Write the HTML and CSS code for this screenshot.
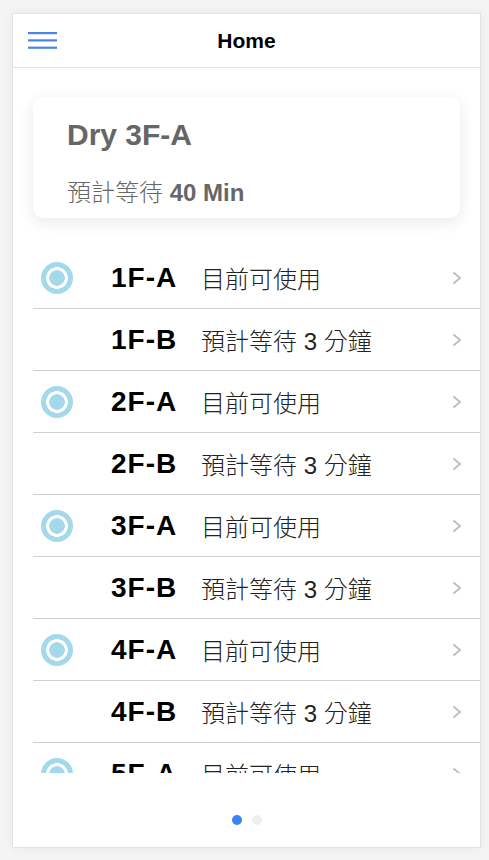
FILE: index.html
```html
<!DOCTYPE html>
<html lang="zh-Hant">
<head>
<meta charset="utf-8">
<title>Home</title>
<link rel="stylesheet" href="styles.css">
</head>
<body>
<div class="app">
  <header class="topbar">
    <button class="menu-btn" aria-label="menu">
      <svg width="29" height="17" viewBox="0 0 29 17"><rect x="0" y="0" width="29" height="2.2" fill="#4a85e2"/><rect x="0" y="7.3" width="29" height="2.2" fill="#4a85e2"/><rect x="0" y="14.6" width="29" height="2.2" fill="#4a85e2"/></svg>
    </button>
    <h1 class="title">Home</h1>
  </header>
  <main class="content">
    <section class="card">
      <div class="card-title">Dry 3F-A</div>
      <div class="card-sub">預計等待 <b>40 Min</b></div>
    </section>
    <ul class="list">
      <li class="row"><span class="icon"><span class="dot"></span></span><span class="label">1F-A</span><span class="status">目前可使用</span><svg class="chev" width="10" height="14" viewBox="0 0 10 14"><polyline points="1.5,1.5 8,7 1.5,12.5" fill="none" stroke="#bdbdbd" stroke-width="1.8"/></svg></li>
      <li class="row"><span class="icon"></span><span class="label">1F-B</span><span class="status">預計等待 3 分鐘</span><svg class="chev" width="10" height="14" viewBox="0 0 10 14"><polyline points="1.5,1.5 8,7 1.5,12.5" fill="none" stroke="#bdbdbd" stroke-width="1.8"/></svg></li>
      <li class="row"><span class="icon"><span class="dot"></span></span><span class="label">2F-A</span><span class="status">目前可使用</span><svg class="chev" width="10" height="14" viewBox="0 0 10 14"><polyline points="1.5,1.5 8,7 1.5,12.5" fill="none" stroke="#bdbdbd" stroke-width="1.8"/></svg></li>
      <li class="row"><span class="icon"></span><span class="label">2F-B</span><span class="status">預計等待 3 分鐘</span><svg class="chev" width="10" height="14" viewBox="0 0 10 14"><polyline points="1.5,1.5 8,7 1.5,12.5" fill="none" stroke="#bdbdbd" stroke-width="1.8"/></svg></li>
      <li class="row"><span class="icon"><span class="dot"></span></span><span class="label">3F-A</span><span class="status">目前可使用</span><svg class="chev" width="10" height="14" viewBox="0 0 10 14"><polyline points="1.5,1.5 8,7 1.5,12.5" fill="none" stroke="#bdbdbd" stroke-width="1.8"/></svg></li>
      <li class="row"><span class="icon"></span><span class="label">3F-B</span><span class="status">預計等待 3 分鐘</span><svg class="chev" width="10" height="14" viewBox="0 0 10 14"><polyline points="1.5,1.5 8,7 1.5,12.5" fill="none" stroke="#bdbdbd" stroke-width="1.8"/></svg></li>
      <li class="row"><span class="icon"><span class="dot"></span></span><span class="label">4F-A</span><span class="status">目前可使用</span><svg class="chev" width="10" height="14" viewBox="0 0 10 14"><polyline points="1.5,1.5 8,7 1.5,12.5" fill="none" stroke="#bdbdbd" stroke-width="1.8"/></svg></li>
      <li class="row"><span class="icon"></span><span class="label">4F-B</span><span class="status">預計等待 3 分鐘</span><svg class="chev" width="10" height="14" viewBox="0 0 10 14"><polyline points="1.5,1.5 8,7 1.5,12.5" fill="none" stroke="#bdbdbd" stroke-width="1.8"/></svg></li>
      <li class="row"><span class="icon"><span class="dot"></span></span><span class="label">5F-A</span><span class="status">目前可使用</span><svg class="chev" width="10" height="14" viewBox="0 0 10 14"><polyline points="1.5,1.5 8,7 1.5,12.5" fill="none" stroke="#bdbdbd" stroke-width="1.8"/></svg></li>
    </ul>
  </main>
  <footer class="pager">
    <span class="pdot active"></span>
    <span class="pdot"></span>
  </footer>
</div>
</body>
</html>
```

FILE: styles.css
```css
* { box-sizing: border-box; }
html, body { margin: 0; padding: 0; }
body {
  background: #f4f4f4;
  font-family: "Liberation Sans", Arial, "Noto Sans CJK TC", sans-serif;
  width: 489px;
  height: 860px;
  overflow: hidden;
}
.app {
  width: 469px;
  height: 835px;
  margin: 13px 0 0 12px;
  background: #fff;
  border: 1px solid #e2e2e2;
  box-shadow: 0 0 10px rgba(0,0,0,0.05);
  display: flex;
  flex-direction: column;
}
.topbar {
  height: 54px;
  border-bottom: 1px solid #e3e3e3;
  display: flex;
  align-items: center;
  position: relative;
  flex: none;
}
.menu-btn {
  border: 0;
  background: none;
  padding: 0;
  margin: 0 0 0 15px;
  width: 29px;
  height: 17px;
  display: block;
  line-height: 0;
}
.title {
  margin: 0;
  position: absolute;
  left: 0;
  right: 0;
  text-align: center;
  font-size: 21px;
  font-weight: bold;
  color: #000;
  pointer-events: none;
}
.content {
  flex: none;
  padding-top: 29px;
}
.card {
  margin: 0 20px;
  height: 121px;
  border-radius: 10px;
  background: #fff;
  box-shadow: 0 4px 16px rgba(0,0,0,0.09);
  padding: 20px 34px 0;
  color: #666;
}
.card-title {
  font-size: 30px;
  font-weight: bold;
  line-height: 36px;
}
.card-sub {
  margin-top: 25px;
  font-size: 24px;
  line-height: 29px;
  font-weight: 300;
}
.card-sub b { font-weight: bold; }
.list {
  list-style: none;
  margin: 29px 0 0 20px;
  padding: 0;
  height: 526px;
  overflow: hidden;
}
.row {
  height: 62px;
  border-bottom: 1px solid #cfcfcf;
  display: flex;
  align-items: center;
  padding-right: 18px;
}
.icon {
  width: 78px;
  height: 32px;
  padding-left: 8px;
  flex: none;
}
.dot {
  display: block;
  width: 32px;
  height: 32px;
  border-radius: 50%;
  background: radial-gradient(circle, #a3d9ea 0 7.5px, #fff 8px 10.6px, #a3d9ea 11.1px);
}
.label {
  width: 90px;
  flex: none;
  font-size: 28px;
  font-weight: bold;
  letter-spacing: 1px;
  color: #000;
}
.status {
  flex: 1;
  font-size: 24px;
  font-weight: 300;
  color: #222;
}
.chev { flex: none; }
.pager {
  flex: 1;
  display: flex;
  justify-content: center;
  gap: 10px;
  padding-top: 42px;
}
.pdot {
  width: 10px;
  height: 10px;
  border-radius: 50%;
  background: #eeeeee;
}
.pdot.active { background: #3a82f6; }
```
